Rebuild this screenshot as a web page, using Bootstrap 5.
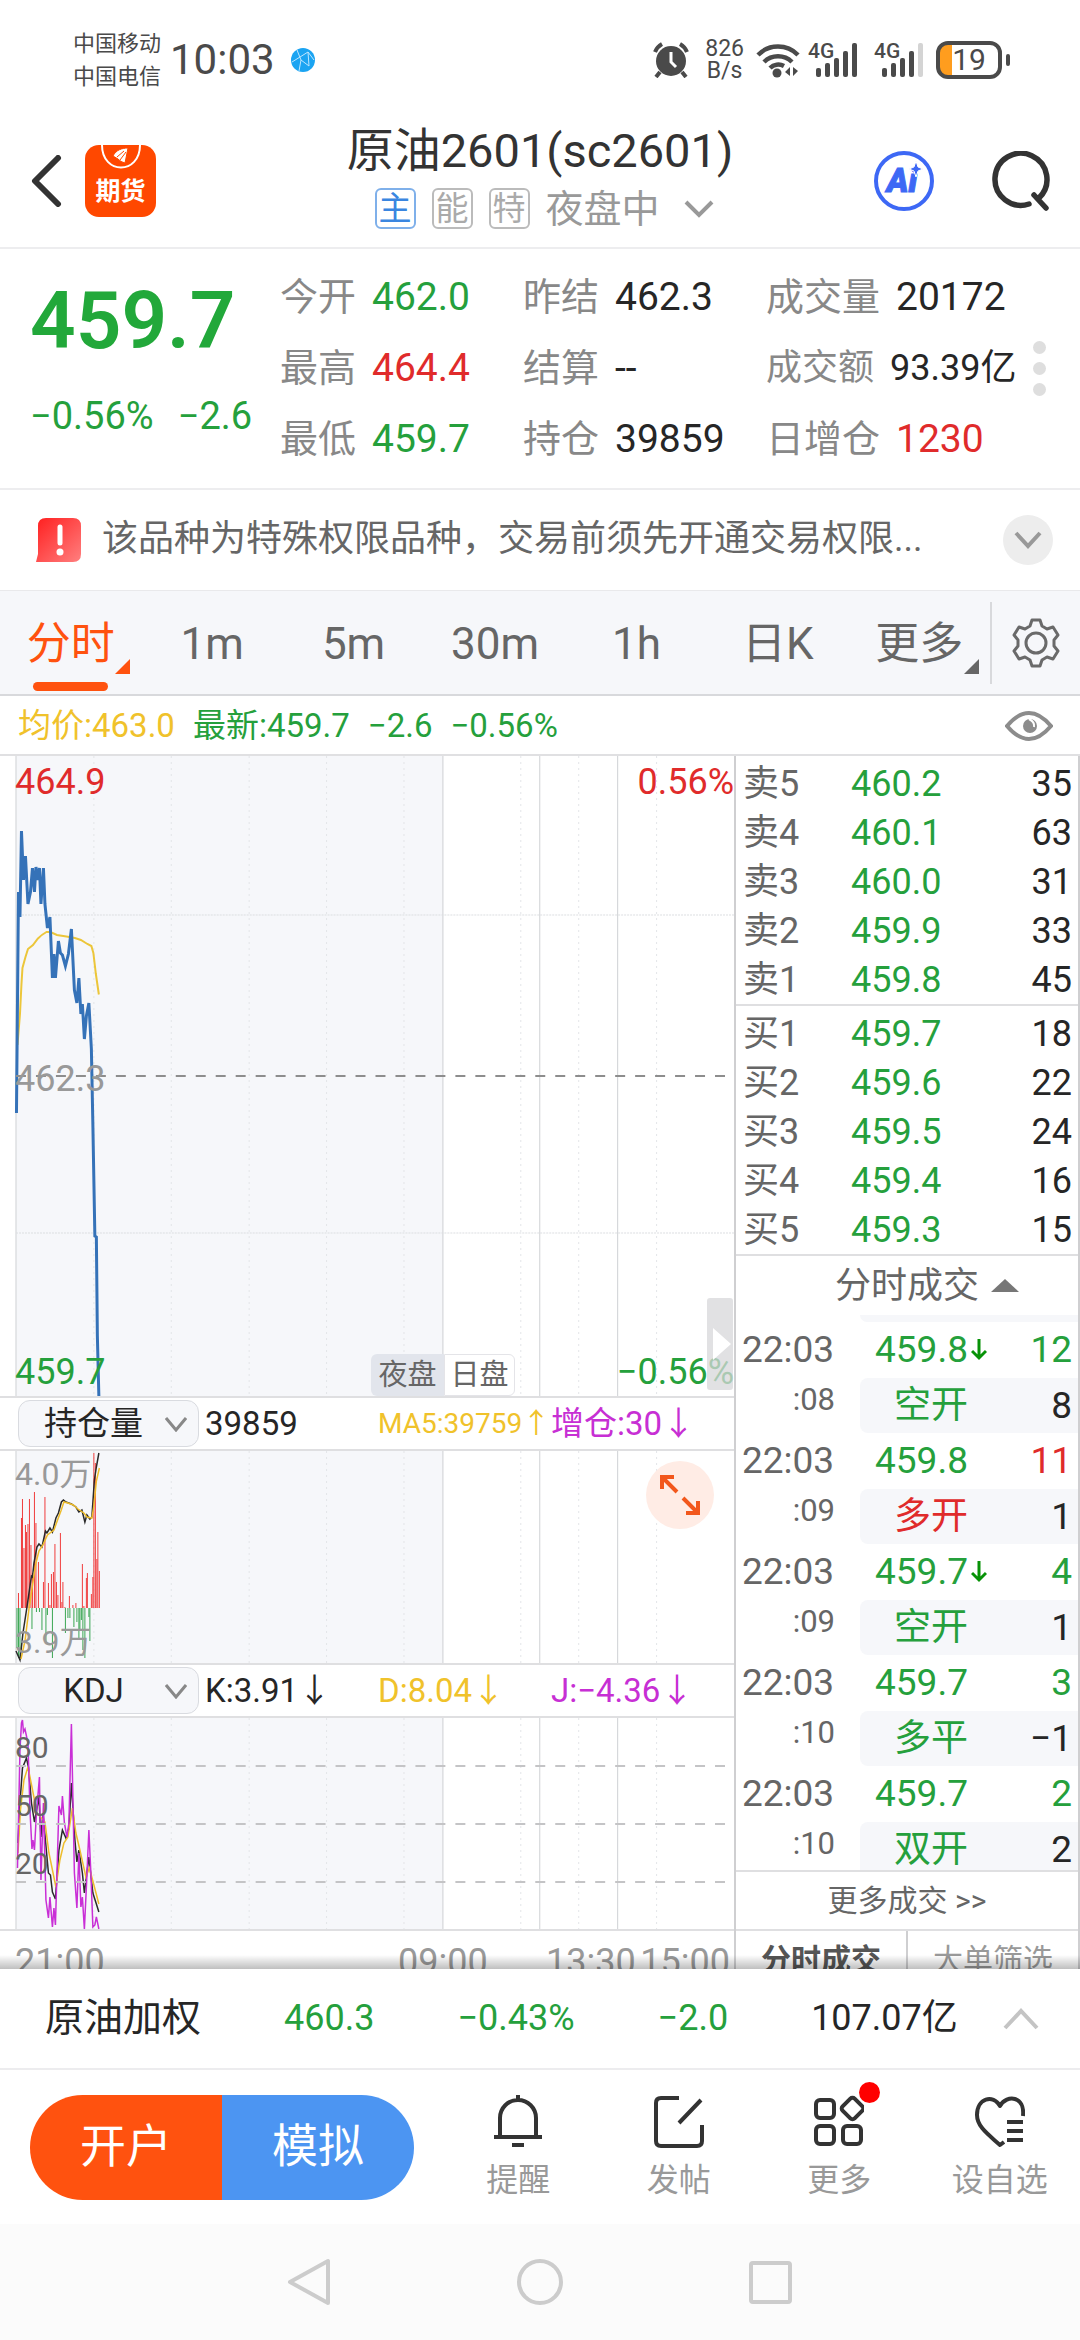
<!DOCTYPE html>
<html lang="zh-CN">
<head>
<meta charset="utf-8">
<meta name="viewport" content="width=device-width, initial-scale=1">
<title>原油2601(sc2601)</title>
<link href="https://cdn.jsdelivr.net/npm/bootstrap@5.3.0/dist/css/bootstrap.min.css" rel="stylesheet">
<style>
:root{--up:#e02b2b;--down:#25a03c;--ink:#262626;--sub:#666;--mute:#999;--avg:#f0c22b;--mag:#c72fd4;--brand:#ff520f;--line:#dfdfe1}
body{font-family:Roboto,"Noto Sans CJK SC",sans-serif;font-size:36px;line-height:1.2;color:var(--ink);background:#fff}
button{border:0;background:none;padding:0;color:inherit}
svg{display:block;flex:none}
.screen{height:100vh}
.screen>*{flex-shrink:0}
.screen>main{flex:1 1 0;min-height:0}
.c-up{color:var(--up)}.c-down{color:var(--down)}.c-avg{color:var(--avg)}.c-mag{color:var(--mag)}.c-sub{color:var(--sub)}.c-mute{color:var(--mute)}
.statusbar{height:122px;padding:0 70px 2px 73px;color:#4a4a4a}
.carrier{font-size:22px;line-height:33px;margin-right:9px}
.clock{font-size:42px}
.rate{font-size:23px;line-height:22px}
.net{font-size:21px;line-height:19px;font-weight:500}
.batt{width:66px;height:38px;border:4px solid #4a4a4a;border-radius:12px;background:linear-gradient(90deg,#ff9d1e 12px,#fff 12px);font-size:30px;line-height:30px}
.batt-tip{width:4px;height:12px;border-radius:2px;background:#4a4a4a}
.apphead{border-bottom:2px solid #ededef;padding:0 30px 7px}
.apphead .side{flex:1 1 0;height:118px}
.logo{width:71px;height:72px;margin-left:23px;border-radius:14px;background:#ff4800;overflow:hidden}
.logo b{font-size:25px;line-height:30px}
.searchbtn{margin-left:58px}
.title{font-size:47px;line-height:58px;color:#333;font-weight:400}
.tagbox{width:41px;height:41px;border:2px solid #bbb;border-radius:6px;font-size:33px;line-height:37px;color:#aaa;text-align:center}
.tagbox.on{color:#3a86e0;border-color:#7fb0ea}
.state{font-size:38px;line-height:40px;color:#999}
.quote{border-bottom:2px solid #ededef;padding:13px 30px 13px;font-size:38px}
.lastcol{width:250px}
.lastprice{font-size:80px;line-height:96px;font-weight:600;margin-top:11px;color:#22a83a}
.lastchg{line-height:46px;margin-top:24px;gap:24px}
.facts{display:grid;grid-template-columns:243px 243px auto;grid-auto-rows:71px;align-items:center}
.facts div{display:flex;gap:16px;align-items:center;white-space:nowrap}
.facts dt{font-weight:400;color:#888}
.facts dd{margin:0;font-size:39px}
.facts .tight dt,.facts .tight dd{font-size:36px}
.dots i{display:block;width:13px;height:13px;border-radius:50%;background:#dedede}
.notice{height:101px;padding:0 27px 0 36px;border-bottom:1px solid #e9e9eb;color:var(--sub)}
.notice .msg{margin-left:21px}
.notice .round{width:50px;height:50px;border-radius:50%;background:#ededed}
.periods{height:105px;background:#f6f7fa;border-bottom:2px solid #d8d9dc}
.periods .nav-link{flex:1 1 0;padding:3px 0 0;font-size:44px;line-height:100px;color:#666;text-align:center;position:relative}
.periods .nav-link.active{color:var(--brand)}
.periods .nav-link.active::before{content:"";position:absolute;left:33px;right:33px;bottom:3px;height:9px;border-radius:5px;background:var(--brand)}
.periods .more::after{content:"";position:absolute;right:11px;bottom:20px;border-left:15px solid transparent;border-bottom:15px solid currentColor}
.gear{width:90px;height:82px;border-left:2px solid #d8d9dc}
.latest{height:60px;padding:2px 27px 0 18px;font-size:33px;border-bottom:2px solid #e0e0e2;gap:18px}
.plots{border-right:2px solid #cfcfd1}
.plots svg.plot{width:100%}
.plot-lab{position:absolute;left:15px;line-height:40px}
.plot-lab.r{left:auto;right:0}
.sess{position:absolute;bottom:0;height:42px;font-size:29px;line-height:40px;color:#666;text-align:center}
.sess.night{left:371px;width:73px;background:#e2e5ec;border-radius:6px 0 0 6px}
.sess.day{left:444px;width:71px;background:#fff;border:1px solid #e4e4e8;border-radius:0 6px 6px 0}
.handle{position:absolute;right:1px;bottom:6px;width:26px;height:92px;background:rgba(215,215,217,.75);border-radius:3px}
.fullbtn{position:absolute;right:20px;top:10px;width:68px;height:68px;border-radius:50%;background:#ffece5}
.indrow{box-sizing:content-box;height:51px;padding-left:18px;font-size:33px;border-top:2px solid var(--line);border-bottom:2px solid var(--line)}
.indrow .form-select{width:181px;height:47px;padding:0 54px 0 24px;border:1px solid #d9dbe0;border-radius:12px;font-size:33px;line-height:45px;text-align:center;text-align-last:center;color:var(--ink);background-color:#f6f7fa;background-position:right 11px center;background-size:22px 16px;background-image:url("data:image/svg+xml,%3Csvg xmlns='http://www.w3.org/2000/svg' viewBox='0 0 22 16'%3E%3Cpath d='M1 2l10 12L21 2' fill='none' stroke='%23888' stroke-width='3'/%3E%3C/svg%3E")}
.indrow span{white-space:nowrap}
.v1{width:173px;margin-left:6px}.v2{width:173px}
.v2.ma{font-size:28px}
.lab-oi{font-size:32px}
.lab-kdj{font-size:30px}
.axis{position:relative;height:60px;border-top:2px solid var(--line);color:#999}
.axis span{position:absolute;top:10px;line-height:42px}
.depth{width:344px;border-right:2px solid #cfcfd1}
.book{width:100%;border-collapse:separate;border-spacing:0;margin:3px 0 0;color:var(--ink)}
.book td,.book th{padding:0;height:49px;line-height:44px;font-weight:400}
.book th{padding-left:7px;width:115px;color:#666}
.book td:last-child{text-align:right;padding-right:6px}
.rule{border-top:2px solid var(--line)}
.dealhead{height:59px;line-height:54px;width:100%;padding-left:40px;gap:12px;color:#666}
.deals{height:555px;overflow:hidden}
.ticks{width:100%;border-collapse:separate;border-spacing:0;font-size:37px}
.ticks td{padding:0;vertical-align:middle}
.ticks .a td{height:56px;line-height:56px}
.ticks .b td{height:55px;line-height:55px}
.ticks td:first-child{width:124px;padding-left:6px;color:#666}
.ticks .b td:first-child{font-size:31px;line-height:44px;text-align:right;padding-right:25px;vertical-align:top}
.ticks td:nth-child(2){width:128px;padding-left:15px}
.ticks .b td:nth-child(2){padding-left:34px;background:#f6f7fa;border-radius:8px 0 0 8px}
.ticks td:last-child{text-align:right;padding-right:6px}
.ticks .b td:last-child{background:#f6f7fa}
.ticks svg{display:inline-block;margin-left:3px;vertical-align:1px}
.stub{height:7px;margin-left:124px;background:#f6f7fa;border-radius:0 0 0 8px}
.moredeal{display:block;height:57px;line-height:57px;font-size:30px;color:#666;text-align:center;text-decoration:none}
.dealtabs button{flex:1 1 0;height:58px;line-height:58px;font-size:30px;color:#999}
.dealtabs button.on{color:#555;font-weight:700;border-right:2px solid #cfcfd1}
.fade-edge{position:absolute;left:0;right:0;bottom:0;height:14px;background:linear-gradient(rgba(0,0,0,0),rgba(0,0,0,.25))}
.indexbar{height:101px;border-bottom:2px solid #ececee;padding:0 45px;gap:83px;white-space:nowrap}
.indexbar .idx{font-size:39px}
.indexbar .up{margin-left:-38px}
.actions{height:154px;padding-left:30px}
.trade{width:384px;height:105px;border-radius:53px;overflow:hidden;font-size:46px;color:#fff}
.trade button{flex:1 1 0;color:#fff}
.open-acct{background:var(--brand)}
.sim{background:#4c95f2}
.act{flex:1 1 0;font-size:32px;line-height:40px;color:#999;position:relative;gap:12px}
.reddot{position:absolute;left:50%;top:-12px;margin-left:20px;width:21px;height:21px;border-radius:50%;background:#f00}
.sysnav{height:116px;background:#fbfbfb;gap:182px}
</style>
</head>
<body>
<div class="screen d-flex flex-column overflow-hidden">

<!-- phone status -->
<div class="statusbar d-flex align-items-center">
  <div class="carrier">中国移动<br>中国电信</div>
  <div class="clock">10:03</div>
  <svg class="ms-3" width="24" height="24" viewBox="0 0 24 24"><circle cx="12" cy="12" r="12" fill="#1ba4f2"/><path d="M1 14L17 4l1 14-8-6M17 4l6 8M6 2l4 10-2 11" fill="none" stroke="#bfe6ff" stroke-width="1"/></svg>
  <div class="ms-auto d-flex align-items-center">
    <svg width="36" height="36" viewBox="0 0 36 36"><circle cx="18" cy="19" r="15" fill="#4a4a4a"/><path d="M2 10a16 16 0 0 1 7-8M34 10a16 16 0 0 0-7-8M7 30l-4 5M29 30l4 5" stroke="#4a4a4a" stroke-width="4" fill="none"/><path d="M18 10v10l5 5" stroke="#fff" stroke-width="3" fill="none"/></svg>
    <div class="rate text-center ms-3 me-1"><div>826</div><div>B/s</div></div>
    <svg class="ms-2 me-2" width="44" height="36" viewBox="0 0 44 36"><g fill="none" stroke="#4a4a4a" stroke-width="4.500"><path d="M2 13a28 28 0 0 1 40 0"/><path d="M8 20a20 20 0 0 1 28 0"/><path d="M14 26a12 12 0 0 1 14-2"/></g><circle cx="21" cy="31" r="4.500" fill="#4a4a4a"/><path d="M34 25v9l-5-4zM37 25v9l5-5z" fill="#4a4a4a"/></svg>
    <div class="position-relative me-3"><svg width="50" height="36" viewBox="0 0 50 36"><g fill="#4a4a4a"><rect x="8" y="26" width="5" height="9" rx="2"/><rect x="17" y="21" width="5" height="14" rx="2"/><rect x="26" y="16" width="5" height="19" rx="2"/><rect x="35" y="9" width="5" height="26" rx="2"/><rect x="44" y="1" width="5" height="34" rx="2"/></g></svg><span class="net position-absolute top-0 start-0">4G</span></div>
    <div class="position-relative me-2"><svg width="50" height="36" viewBox="0 0 50 36"><g fill="#4a4a4a"><rect x="8" y="26" width="5" height="9" rx="2"/><rect x="17" y="21" width="5" height="14" rx="2"/><rect x="26" y="16" width="5" height="19" rx="2"/><rect x="35" y="9" width="5" height="26" rx="2"/></g><rect x="44" y="1" width="5" height="34" rx="2" fill="#d4d4d4"/></svg><span class="net position-absolute top-0 start-0">4G</span></div>
    <div class="batt text-center ms-1">19</div><div class="batt-tip ms-1"></div>
  </div>
</div>

<!-- title bar -->
<header class="apphead d-flex align-items-start">
  <div class="side d-flex align-items-center">
    <button aria-label="返回"><svg width="32" height="52" viewBox="0 0 32 52"><path d="M28 3L5 26l23 23" fill="none" stroke="#333" stroke-width="6" stroke-linejoin="round" stroke-linecap="round"/></svg></button>
    <div class="logo d-flex flex-column align-items-center text-white">
      <svg width="44" height="32" viewBox="0 0 44 32"><path d="M3 0c0 30 38 30 38 0" fill="none" stroke="#fff" stroke-width="2"/><path d="M14 11C17 5 23 3 29 3l-3 15c-3-1-5-2-7-4zM18 12l7-6M21 15l6-8" fill="#fff" stroke="#ff4800" stroke-width="1"/></svg>
      <b>期货</b>
    </div>
  </div>
  <div class="d-flex flex-column align-items-center">
    <h1 class="title m-0">原油2601(sc2601)</h1>
    <div class="d-flex align-items-center mt-2 ms-2">
      <span class="tagbox on">主</span><span class="tagbox ms-3">能</span><span class="tagbox ms-3 me-3">特</span>
      <span class="state">夜盘中</span>
      <svg class="ms-4" width="30" height="18" viewBox="0 0 30 18"><path d="M2 2l13 13L28 2" fill="none" stroke="#999" stroke-width="4"/></svg>
    </div>
  </div>
  <div class="side d-flex align-items-center justify-content-end">
    <button aria-label="Ai"><svg width="60" height="60" viewBox="0 0 60 60"><circle cx="30" cy="30" r="28" fill="none" stroke="#3d68f5" stroke-width="4"/><text x="28" y="41" text-anchor="middle" font-family="Roboto,sans-serif" font-weight="900" font-style="italic" font-size="33" fill="#3d68f5" stroke="#3d68f5">Ai</text><path d="M42 10l2 6 5 2-5 2-2 6-2-6-5-2 5-2z" fill="#3d68f5" stroke="#fff"/></svg></button>
    <button class="searchbtn" aria-label="搜索"><svg width="58" height="60" viewBox="0 0 58 60"><path d="M37 53A26 26 0 1 1 47 47M42 44l12 13" fill="none" stroke="#333" stroke-width="5.500" stroke-linecap="round"/></svg></button>
  </div>
</header>

<!-- quote -->
<section class="quote d-flex">
  <div class="lastcol c-down">
    <div class="lastprice">459.7</div>
    <div class="lastchg d-flex"><span>−0.56%</span><span>−2.6</span></div>
  </div>
  <dl class="facts m-0">
    <div><dt>今开</dt><dd class="c-down">462.0</dd></div><div><dt>昨结</dt><dd>462.3</dd></div><div><dt>成交量</dt><dd>20172</dd></div>
    <div><dt>最高</dt><dd class="c-up">464.4</dd></div><div><dt>结算</dt><dd>--</dd></div><div class="tight"><dt>成交额</dt><dd>93.39亿</dd></div>
    <div><dt>最低</dt><dd class="c-down">459.7</dd></div><div><dt>持仓</dt><dd>39859</dd></div><div><dt>日增仓</dt><dd class="c-up">1230</dd></div>
  </dl>
  <div class="dots ms-auto d-flex flex-column justify-content-center gap-2 pe-1"><i></i><i></i><i></i></div>
</section>

<!-- notice -->
<div class="notice d-flex align-items-center">
  <svg width="45" height="44" viewBox="0 0 45 44"><defs><linearGradient id="warn" x1="0" y1="0" x2="1" y2="1"><stop offset="0" stop-color="#ff1f1f"/><stop offset="1" stop-color="#ff7f7f"/></linearGradient></defs><path d="M10 0h27q8 0 8 8v28q0 8-8 8H0l2-8V8q0-8 8-8z" fill="url(#warn)"/><path d="M24 9v16" stroke="#fff" stroke-width="5" stroke-linecap="round"/><circle cx="24" cy="34" r="3.500" fill="#fff"/></svg>
  <div class="msg flex-fill text-truncate">该品种为特殊权限品种，交易前须先开通交易权限...</div>
  <button class="round d-flex align-items-center justify-content-center" aria-label="展开"><svg width="28" height="18" viewBox="0 0 28 18"><path d="M2 2l12 13L26 2" fill="none" stroke="#999" stroke-width="4"/></svg></button>
</div>

<!-- periods -->
<nav class="periods d-flex align-items-center">
  <a class="nav-link active more" href="#">分时</a><a class="nav-link" href="#">1m</a><a class="nav-link" href="#">5m</a><a class="nav-link" href="#">30m</a><a class="nav-link" href="#">1h</a><a class="nav-link" href="#">日K</a><a class="nav-link more" href="#">更多</a>
  <button class="gear d-flex align-items-center justify-content-center" aria-label="设置"><svg width="48" height="50" viewBox="0 0 48 50"><g fill="none" stroke="#6a6a6a" stroke-width="3" stroke-linejoin="round"><path d="M20 2h8l2 6 5 3 6-2 5 8-4 5v6l4 5-5 8-6-2-5 3-2 6h-8l-2-6-5-3-6 2-5-8 4-5v-6l-4-5 5-8 6 2 5-3z"/><circle cx="24" cy="25" r="10"/></g></svg></button>
</nav>
<div class="latest d-flex align-items-center">
  <span class="c-avg">均价:463.0</span><span class="c-down">最新:459.7</span><span class="c-down">−2.6</span><span class="c-down">−0.56%</span>
  <svg class="ms-auto" width="48" height="30" viewBox="0 0 48 30"><path d="M2 15Q13 2 24 2t22 13Q35 28 24 28T2 15z" fill="none" stroke="#8c8c8c" stroke-width="4"/><circle cx="25" cy="15" r="7" fill="#8c8c8c"/><path d="M24 8q6 3 5 8" stroke="#fff" stroke-width="2" fill="none"/></svg>
</div>

<!-- charts and depth -->
<main class="d-flex position-relative overflow-hidden">
  <div class="plots col">
    <div class="position-relative">
      <svg class="plot" height="640" viewBox="0 0 735 640" preserveAspectRatio="none">
        <defs><g id="sessions"><rect x="16" width="428" height="640" fill="#f6f7fa"/><g stroke="#e3e5e8" stroke-dasharray="2 4"><path d="M94 0v640M171.500 0v640M249.500 0v640M327 0v640M404.500 0v640M521.500 0v640M579.500 0v640M657.500 0v640"/></g><path d="M16 0v640M443.500 0v640M540.500 0v640M618.500 0v640" stroke="#cfd1d4" stroke-width="1"/></g></defs>
        <use href="#sessions"/>
        <path d="M16 159h719M16 477h719" stroke="#dcdee1" stroke-dasharray="2 1"/>
        <path d="M17.500 289L20 258l1.500-30 1-16 3-11 2.500-8 5-4 5-6.500q4-4 8.500-6.500h4l6.500 3 9.500 1.500 8.500 1.500 6 2 6.500 4 4 2 2 7 2.500 21 3 20.500" fill="none" stroke="#ecc63a" stroke-width="2"/>
        <path d="M16.500 357L18.500 136 20 161 21.500 75 23.500 124 25.500 100 28 148 30.500 136 32.500 112 34.500 136 36 111 38 124 39.500 112 41 148 43.500 112 45 148 47.500 172 50 161 52.500 222 54 198 55.500 222 58.500 185 60.500 197 62.500 199 65.500 210 68.500 198 71.500 173 74.500 234 77 247 79 222 81 258 82.500 248 84.500 283 86.500 260 89 247 91.500 293 93 369 95 480 96.500 481 97.500 580 99 640" fill="none" stroke="#3572b8" stroke-width="3"/>
        <path d="M16 320h712" stroke="#8d8d8d" stroke-width="2" stroke-dasharray="10 10"/>
      </svg>
      <span class="plot-lab c-up" style="top:6px">464.9</span><span class="plot-lab r c-up" style="top:6px">0.56%</span>
      <span class="plot-lab c-mute" style="top:303px">462.3</span>
      <span class="plot-lab c-down" style="bottom:4px">459.7</span><span class="plot-lab r c-down" style="bottom:4px">−0.56%</span>
      <button class="sess night">夜盘</button><button class="sess day">日盘</button>
      <button class="handle d-flex align-items-center justify-content-end" aria-label="展开盘口"><svg width="20" height="32" viewBox="0 0 20 32"><path d="M0 0l18 16L0 32z" fill="#fff"/></svg></button>
    </div>

    <div class="indrow d-flex align-items-center">
      <select class="form-select" aria-label="副图指标一"><option>持仓量</option></select>
      <span class="v1">39859</span><span class="v2 ma c-avg">MA5:39759↑</span><span class="c-mag">增仓:30↓</span>
    </div>
    <div class="position-relative">
      <svg class="plot" height="212" viewBox="0 0 735 212" preserveAspectRatio="none">
        <use href="#sessions"/>
        <path d="M18.500 157V142M21.500 157V67M22.500 157V48M24 157V97M25.500 157V74M26.500 157V81M28 157V73M29.500 157V48M31 157V94M32.500 157V122M34.500 157V41M36 157V72M38.500 157V111M43.500 157V131M45 157V46M48.500 157V132M50 157V154M51.500 157V123M53.500 157V121M55 157V93M56.500 157V131M58 157V144M60.500 157V82M62 157V151M63 157V131M65 157V156M69.500 157V145M73 157V154M76 157V152M82.500 157V113M84 157V155M86.500 157V127M87.500 157V122M91.500 157V143M93 157V126M94 157V2M95.500 157V12M97 157V108M98 157V81M99.500 157V120" stroke="#f03c3c" stroke-width="1"/>
        <path d="M17 157V197M18.500 157V207M20 157V209M32 157V178M36.500 157V161M39.500 157V161M42 157V179M46 157V192M47.500 157V164M52.500 157V207M65.500 157V182M68 157V167M70 157V167M74 157V176M77 157V171M79 157V189M80 157V179M81.500 157V169M83 157V199M85 157V207M89 157V166M90 157V190" stroke="#3aa652" stroke-width="1"/>
        <path d="M16 200L20 209 23 182 27 156 31.500 125 32.500 126 34 112 37 96 39 93 42 96 45.500 80 47 82 50 77 52.500 81 56 67 58.500 62 61.500 51 63.500 49 66 51 71.500 53 76 56 79 61 82 59 85 71 87 64 90 68 92 66 94.500 29 96.500 16 99 2" fill="none" stroke="#2a2a2a" stroke-width="1.500"/>
        <path d="M21 208L25 190 29 158 33.500 128 36 112 39 100 43 94 47.500 84 54 79 58 68 61 60 64 51 68 52 73.500 54 78 58 84 62 87 66 92 67 94 55 96.500 30 99.500 17" fill="none" stroke="#eebd2c" stroke-width="1.500"/>
      </svg>
      <span class="plot-lab lab-oi c-mute" style="top:3px">4.0万</span>
      <span class="plot-lab lab-oi c-mute" style="bottom:1px">3.9万</span>
      <button class="fullbtn d-flex align-items-center justify-content-center" aria-label="全屏"><svg width="42" height="42" viewBox="0 0 42 42"><path d="M18 18L3 3M3 15V3h12M24 24l15 15M27 39h12V27" fill="none" stroke="#f2571c" stroke-width="4"/></svg></button>
    </div>

    <div class="indrow d-flex align-items-center">
      <select class="form-select" aria-label="副图指标二"><option>KDJ</option></select>
      <span class="v1">K:3.91↓</span><span class="v2 c-avg">D:8.04↓</span><span class="c-mag">J:−4.36↓</span>
    </div>
    <div class="position-relative">
      <svg class="plot" height="211" viewBox="0 0 735 211" preserveAspectRatio="none">
        <use href="#sessions"/>
        <path d="M18 125L20 85 22.500 50 26.500 40 28.500 49 31.500 85 34.500 104 39 79 41 119 43 95 48.500 155 50.500 157 52.500 174 55.500 181 59 132 62.500 112 66 120 69 110 71.500 65 75 122 77 144 79 132 82.500 155 84.500 175 89 139 93 175 96.500 186 99 194" fill="none" stroke="#2a2a2a" stroke-width="1.500"/>
        <path d="M18 135L20.500 92 24 62 28 49 32 69 37 95 45 104 49 135 56 169 60 142 64 125 68 119 72.500 90 76 115 80 132 86 159 89.500 150 93.500 165 99 186" fill="none" stroke="#eebd2c" stroke-width="1.500"/>
        <path d="M17.500 150L20 32 21.500 5 22.500 2 23.500 14 25 11 28 25 30 92 32 131 33 122 34.500 132 36.500 95 39.500 59 41 162 43.500 85 46 182 48.500 200 50 179 52.500 209 54 190 55.500 207 59 88 61.500 97 62.500 78 64.500 105 67 119 69 105 71.500 6 74.500 155 77 190 79 135 81 189 82.500 179 84.500 211 86.500 169 89 112 91 155 93 209 95 207 96.500 199 99 211" fill="none" stroke="#c92fd6" stroke-width="1.500"/>
        <path d="M16 48h712M16 106h712M16 164h712" stroke="#c4c4c6" stroke-width="2" stroke-dasharray="10 10"/>
      </svg>
      <span class="plot-lab lab-kdj c-sub" style="top:10px">80</span>
      <span class="plot-lab lab-kdj c-sub" style="top:68px">50</span>
      <span class="plot-lab lab-kdj c-sub" style="top:126px">20</span>
    </div>
    <div class="axis"><span style="left:15px">21:00</span><span style="left:398px">09:00</span><span style="left:546px">13:30</span><span style="right:4px">15:00</span></div>
  </div>

  <aside class="depth flex-shrink-0">
    <table class="book">
      <tr><th scope="row">卖5</th><td class="c-down">460.2</td><td>35</td></tr>
      <tr><th scope="row">卖4</th><td class="c-down">460.1</td><td>63</td></tr>
      <tr><th scope="row">卖3</th><td class="c-down">460.0</td><td>31</td></tr>
      <tr><th scope="row">卖2</th><td class="c-down">459.9</td><td>33</td></tr>
      <tr><th scope="row">卖1</th><td class="c-down">459.8</td><td>45</td></tr>
    </table>
    <div class="rule"></div>
    <table class="book">
      <tr><th scope="row">买1</th><td class="c-down">459.7</td><td>18</td></tr>
      <tr><th scope="row">买2</th><td class="c-down">459.6</td><td>22</td></tr>
      <tr><th scope="row">买3</th><td class="c-down">459.5</td><td>24</td></tr>
      <tr><th scope="row">买4</th><td class="c-down">459.4</td><td>16</td></tr>
      <tr><th scope="row">买5</th><td class="c-down">459.3</td><td>15</td></tr>
    </table>
    <div class="rule"></div>
    <button class="dealhead d-flex justify-content-center align-items-center">分时成交<svg width="28" height="13" viewBox="0 0 28 13"><path d="M14 0l14 13H0z" fill="#777"/></svg></button>
    <div class="deals">
      <div class="stub"></div>
      <table class="ticks">
        <tr class="a"><td>22:03</td><td class="c-down text-nowrap">459.8<svg width="16" height="22" viewBox="0 0 16 22"><path d="M8 0v19M1 12l7 7 7-7" fill="none" stroke="#079207" stroke-width="3"/></svg></td><td class="c-down">12</td></tr>
        <tr class="b"><td>:08</td><td class="c-down">空开</td><td>8</td></tr>
        <tr class="a"><td>22:03</td><td class="c-down">459.8</td><td class="c-up">11</td></tr>
        <tr class="b"><td>:09</td><td class="c-up">多开</td><td>1</td></tr>
        <tr class="a"><td>22:03</td><td class="c-down text-nowrap">459.7<svg width="16" height="22" viewBox="0 0 16 22"><path d="M8 0v19M1 12l7 7 7-7" fill="none" stroke="#079207" stroke-width="3"/></svg></td><td class="c-down">4</td></tr>
        <tr class="b"><td>:09</td><td class="c-down">空开</td><td>1</td></tr>
        <tr class="a"><td>22:03</td><td class="c-down">459.7</td><td class="c-down">3</td></tr>
        <tr class="b"><td>:10</td><td class="c-down">多平</td><td>−1</td></tr>
        <tr class="a"><td>22:03</td><td class="c-down">459.7</td><td class="c-down">2</td></tr>
        <tr class="b"><td>:10</td><td class="c-down">双开</td><td>2</td></tr>
      </table>
    </div>
    <div class="rule"></div>
    <a class="moredeal" href="#">更多成交 &gt;&gt;</a>
    <div class="rule"></div>
    <div class="dealtabs d-flex"><button class="on">分时成交</button><button>大单筛选</button></div>
  </aside>
  <div class="fade-edge"></div>
</main>

<!-- index strip, actions, system keys -->
<div class="indexbar d-flex align-items-center">
  <span class="idx">原油加权</span><span class="c-down">460.3</span><span class="c-down">−0.43%</span><span class="c-down">−2.0</span><span>107.07亿</span>
  <svg class="up" width="36" height="22" viewBox="0 0 36 22"><path d="M2 20L18 3l16 17" fill="none" stroke="#c4c4c4" stroke-width="4"/></svg>
</div>
<div class="actions d-flex align-items-center">
  <div class="trade d-flex"><button class="open-acct">开户</button><button class="sim">模拟</button></div>
  <div class="d-flex flex-fill ps-4">
    <button class="act d-flex flex-column align-items-center"><svg width="50" height="54" viewBox="0 0 50 54"><path d="M7 43V24a18 18 0 0 1 36 0v19M1 43h48M25 1v5M19 51h12" fill="none" stroke="#333" stroke-width="4"/></svg>提醒</button>
    <button class="act d-flex flex-column align-items-center"><svg width="50" height="54" viewBox="0 0 50 54"><path d="M25 4H7Q2 4 2 9v38q0 5 5 5h36q5 0 5-5V31M47 6L25 29" fill="none" stroke="#333" stroke-width="4"/></svg>发帖</button>
    <button class="act d-flex flex-column align-items-center"><svg width="50" height="54" viewBox="0 0 50 54"><g fill="none" stroke="#333" stroke-width="4"><rect x="2" y="6" width="18" height="18" rx="4"/><rect x="2" y="32" width="18" height="18" rx="4"/><rect x="29" y="32" width="18" height="18" rx="4"/><rect x="30" y="6" width="17" height="17" rx="3" transform="rotate(45 38.500 14.500)"/></g></svg>更多<i class="reddot"></i></button>
    <button class="act d-flex flex-column align-items-center"><svg width="50" height="54" viewBox="0 0 50 54"><path d="M48 22C50 2 32 0 25 12 18 0 2 4 2 21c0 12 12 20 23 30l4-3M32 28h16M32 37h16M32 46h16" fill="none" stroke="#333" stroke-width="4" stroke-linejoin="round"/></svg>设自选</button>
  </div>
</div>
<div class="sysnav d-flex align-items-center justify-content-center">
  <button aria-label="返回键"><svg width="48" height="48" viewBox="0 0 48 48"><path d="M42 3v42L4 24z" fill="none" stroke="#ccc" stroke-width="4" stroke-linejoin="round"/></svg></button>
  <button aria-label="主页键"><svg width="48" height="48" viewBox="0 0 48 48"><circle cx="24" cy="24" r="21" fill="none" stroke="#ccc" stroke-width="4"/></svg></button>
  <button aria-label="任务键"><svg width="48" height="48" viewBox="0 0 48 48"><rect x="5" y="5" width="39" height="39" rx="2" fill="none" stroke="#ccc" stroke-width="4"/></svg></button>
</div>
</div>
<script src="https://cdn.jsdelivr.net/npm/bootstrap@5.3.0/dist/js/bootstrap.bundle.min.js"></script>
</body>
</html>
